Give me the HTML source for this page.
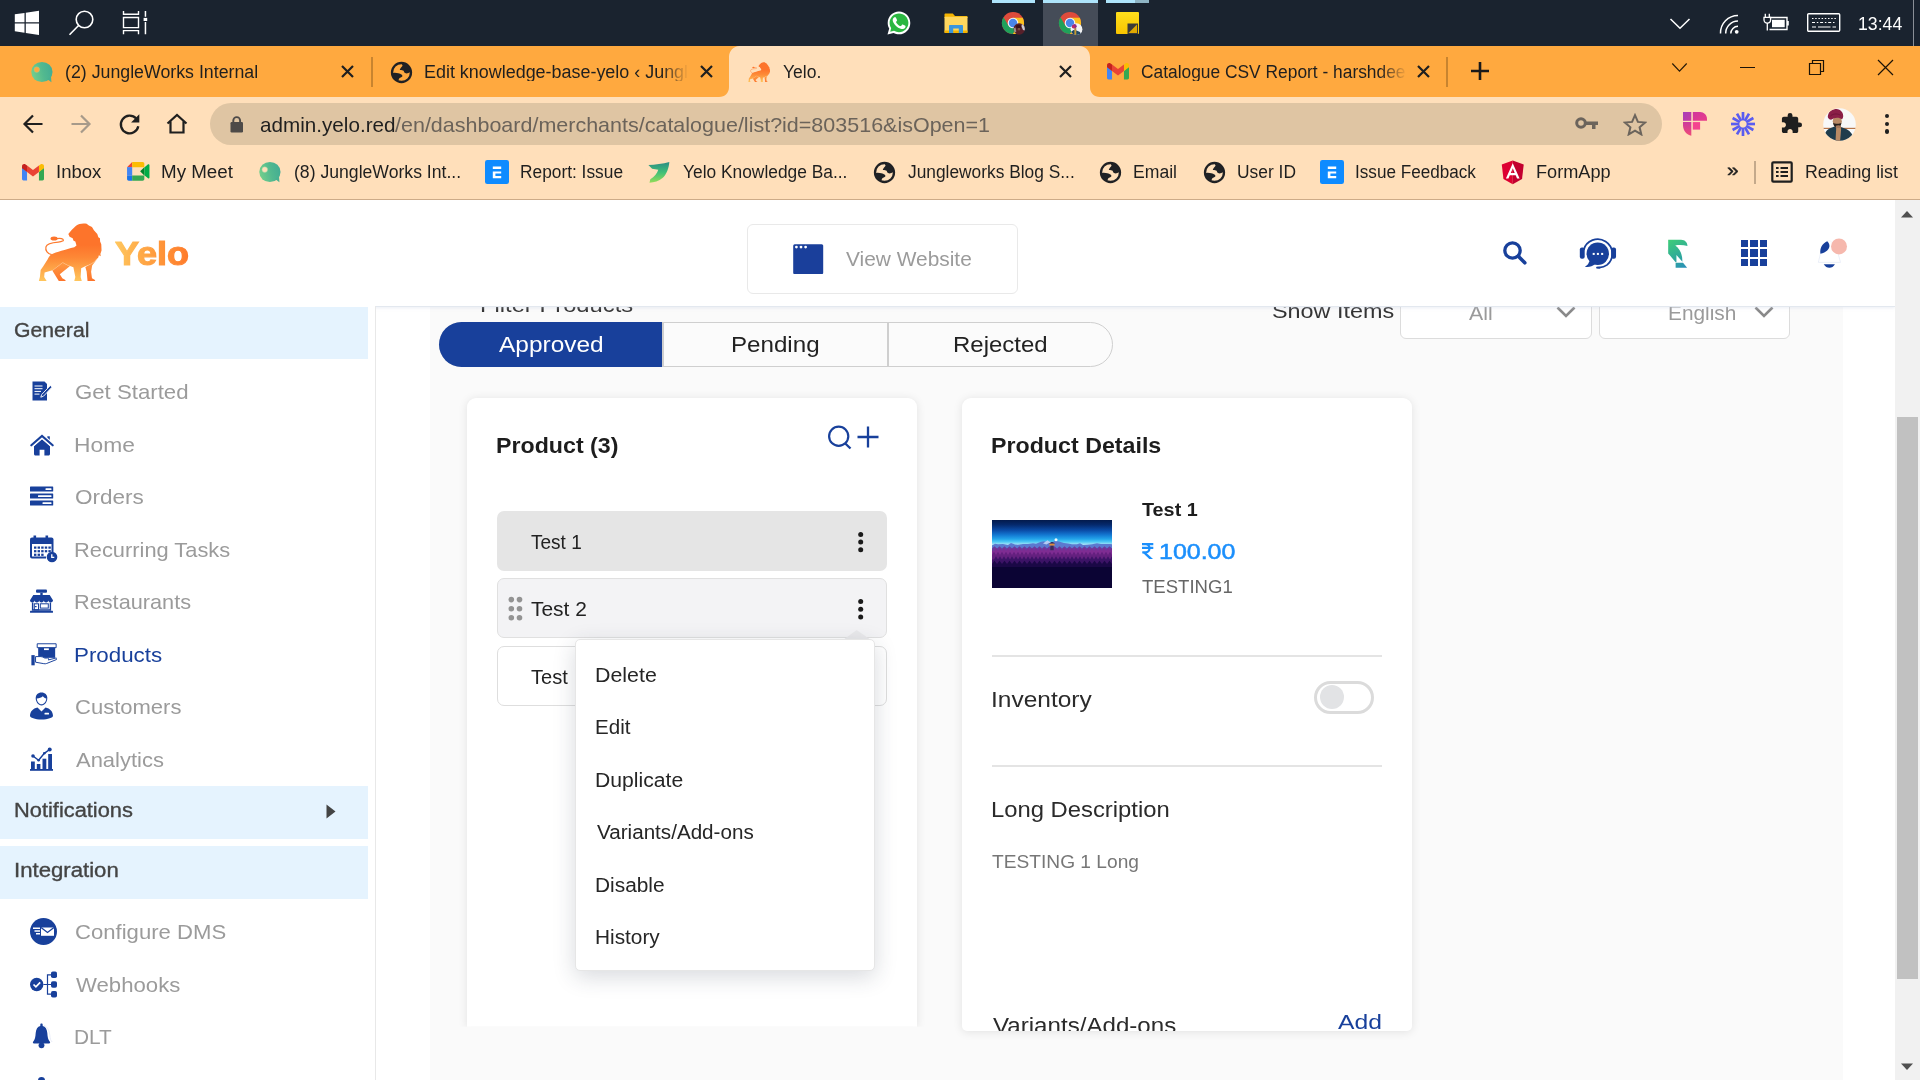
<!DOCTYPE html>
<html><head><meta charset="utf-8"><title>Yelo.</title>
<style>
html,body{margin:0;padding:0;}
body{width:1920px;height:1080px;overflow:hidden;position:relative;background:#fff;font-family:"Liberation Sans",sans-serif;}
.t{position:absolute;white-space:nowrap;font-family:"Liberation Sans",sans-serif;}
.r{position:absolute;box-sizing:border-box;}
</style></head><body>
<div class="r" style="left:0px;top:200px;width:1895px;height:880px;background:#fff;"></div>
<div class="r" style="left:429.5px;top:306px;width:1413.5px;height:774px;background:#fafafa;"></div>
<div class="t" style="left:480.10px;top:294.00px;font-size:21px;line-height:21px;color:#333;font-weight:400;transform:scaleX(1.1311);transform-origin:0 0;">Filter Products</div>
<div class="t" style="left:1271.56px;top:300.00px;font-size:21px;line-height:21px;color:#333;font-weight:400;transform:scaleX(1.1133);transform-origin:0 0;">Show Items</div>
<div class="r" style="left:1400px;top:280px;width:191.5px;height:58.5px;background:#fff;border:1px solid #dcdcdc;border-radius:6px;"></div>
<div class="r" style="left:1598.5px;top:280px;width:191.5px;height:58.5px;background:#fff;border:1px solid #dcdcdc;border-radius:6px;"></div>
<div class="t" style="left:1468.70px;top:303.00px;font-size:20.5px;line-height:20.5px;color:#9a9a9a;font-weight:400;transform:scaleX(1.0368);transform-origin:0 0;">All</div>
<div class="t" style="left:1668.33px;top:303.00px;font-size:20.5px;line-height:20.5px;color:#9a9a9a;font-weight:400;transform:scaleX(1.0164);transform-origin:0 0;">English</div>
<svg class="r" style="left:1555px;top:303px;" width="22" height="16" viewBox="0 0 22 16"><path d="M2.500 4.500L11 13l8.500-8.500" fill="none" stroke="#8a8a8a" stroke-width="2.600"/></svg>
<svg class="r" style="left:1753px;top:303px;" width="22" height="16" viewBox="0 0 22 16"><path d="M2.500 4.500L11 13l8.500-8.500" fill="none" stroke="#8a8a8a" stroke-width="2.600"/></svg>
<div class="r" style="left:438.5px;top:322px;width:674px;height:44.5px;background:#fbfbfb;border:1px solid #cfcfcf;border-radius:22.500px;"></div>
<div class="r" style="left:438.5px;top:322px;width:223.5px;height:44.5px;background:#18409b;border-radius:22.500px 0 0 22.500px;"></div>
<div class="r" style="left:662px;top:322px;width:1.5px;height:44.5px;background:#cfcfcf;"></div>
<div class="r" style="left:887.3px;top:322px;width:1.5px;height:44.5px;background:#cfcfcf;"></div>
<div class="t" style="left:499.00px;top:334.00px;font-size:22px;line-height:22px;color:#fff;font-weight:400;transform:scaleX(1.1115);transform-origin:0 0;">Approved</div>
<div class="t" style="left:731.07px;top:334.00px;font-size:22px;line-height:22px;color:#222;font-weight:400;transform:scaleX(1.0972);transform-origin:0 0;">Pending</div>
<div class="t" style="left:953.08px;top:334.00px;font-size:22px;line-height:22px;color:#222;font-weight:400;transform:scaleX(1.0891);transform-origin:0 0;">Rejected</div>
<div class="r" style="left:467px;top:398px;width:450px;height:628.7px;background:#fff;border-radius:9px 9px 0 0;box-shadow:0 1px 10px rgba(0,0,0,.10);clip-path:inset(-20px -20px 0 -20px);"></div>
<div class="t" style="left:496.31px;top:436.00px;font-size:21.5px;line-height:21.5px;color:#1d1d1d;font-weight:700;transform:scaleX(1.0786);transform-origin:0 0;">Product (3)</div>
<svg class="r" style="left:826px;top:424px;" width="28" height="28" viewBox="0 0 28 28"><circle cx="12.700" cy="12.300" r="9.600" fill="none" stroke="#18409b" stroke-width="2.200"/><path d="M19.300 19.500L24.500 24.500" stroke="#18409b" stroke-width="2.400"/></svg>
<svg class="r" style="left:856px;top:425px;" width="24" height="24" viewBox="0 0 24 24"><path d="M12 1.500v21M1.500 12h21" stroke="#18409b" stroke-width="2.300"/></svg>
<div class="r" style="left:497px;top:511px;width:390px;height:60px;background:#e5e5e5;border-radius:7px;"></div>
<div class="r" style="left:497px;top:578px;width:390px;height:60px;background:#f3f3f5;border:1px solid #e0e0e0;border-radius:7px;"></div>
<div class="r" style="left:497px;top:646px;width:390px;height:60px;background:#fff;border:1px solid #dedede;border-radius:7px;"></div>
<div class="t" style="left:531.12px;top:533.00px;font-size:19.5px;line-height:19.5px;color:#222;font-weight:400;transform:scaleX(0.9756);transform-origin:0 0;">Test 1</div>
<div class="t" style="left:531.08px;top:600.00px;font-size:19.5px;line-height:19.5px;color:#222;font-weight:400;transform:scaleX(1.0742);transform-origin:0 0;">Test 2</div>
<div class="t" style="left:531.10px;top:668.00px;font-size:19.5px;line-height:19.5px;color:#222;font-weight:400;transform:scaleX(1.0306);transform-origin:0 0;">Test</div>
<svg class="r" style="left:500px;top:520px;" width="380" height="110" viewBox="-350 0 380 110"><circle cx="10.7" cy="14.4" r="2.500" fill="#1a1a1a"/><circle cx="10.7" cy="22.1" r="2.500" fill="#1a1a1a"/><circle cx="10.7" cy="29.8" r="2.500" fill="#1a1a1a"/><circle cx="10.7" cy="81.6" r="2.500" fill="#1a1a1a"/><circle cx="10.7" cy="89.3" r="2.500" fill="#1a1a1a"/><circle cx="10.7" cy="97.0" r="2.500" fill="#1a1a1a"/><circle cx="-338.7" cy="79.6" r="2.800" fill="#939393"/><circle cx="-338.7" cy="88.7" r="2.800" fill="#939393"/><circle cx="-338.7" cy="97.7" r="2.800" fill="#939393"/><circle cx="-330.5" cy="79.6" r="2.800" fill="#939393"/><circle cx="-330.5" cy="88.7" r="2.800" fill="#939393"/><circle cx="-330.5" cy="97.7" r="2.800" fill="#939393"/></svg>
<svg class="r" style="left:843px;top:629.5px;" width="28" height="10" viewBox="0 0 28 10"><path d="M0 10L13.700 0 28 10z" fill="#e9e9eb"/></svg>
<div class="r" style="left:575px;top:638.5px;width:299.5px;height:332px;background:#fff;border-radius:5px;border:1px solid #e6e6e6;box-shadow:0 6px 22px rgba(40,50,70,.18);"></div>
<div class="t" style="left:594.99px;top:666.00px;font-size:19.5px;line-height:19.5px;color:#262626;font-weight:400;transform:scaleX(1.0961);transform-origin:0 0;">Delete</div>
<div class="t" style="left:595.06px;top:718.00px;font-size:19.5px;line-height:19.5px;color:#262626;font-weight:400;transform:scaleX(1.0535);transform-origin:0 0;">Edit</div>
<div class="t" style="left:595.01px;top:771.00px;font-size:19.5px;line-height:19.5px;color:#262626;font-weight:400;transform:scaleX(1.0844);transform-origin:0 0;">Duplicate</div>
<div class="t" style="left:596.70px;top:823.00px;font-size:19.5px;line-height:19.5px;color:#262626;font-weight:400;transform:scaleX(1.0579);transform-origin:0 0;">Variants/Add-ons</div>
<div class="t" style="left:595.03px;top:876.00px;font-size:19.5px;line-height:19.5px;color:#262626;font-weight:400;transform:scaleX(1.0706);transform-origin:0 0;">Disable</div>
<div class="t" style="left:595.03px;top:928.00px;font-size:19.5px;line-height:19.5px;color:#262626;font-weight:400;transform:scaleX(1.0675);transform-origin:0 0;">History</div>
<div class="r" style="left:962px;top:398px;width:450px;height:633px;background:#fff;border-radius:9px 9px 5px 5px;box-shadow:0 1px 10px rgba(0,0,0,.10);overflow:hidden;"></div>
<div class="t" style="left:990.81px;top:436.00px;font-size:21.5px;line-height:21.5px;color:#1d1d1d;font-weight:700;transform:scaleX(1.0795);transform-origin:0 0;">Product Details</div>
<div class="r" style="left:992px;top:520px;width:120px;height:68px;overflow:hidden;background:linear-gradient(180deg,#031a4c 0%,#05296c 7%,#0a4ba6 15%,#1378d2 22%,#23a4ea 28%,#4cc8f4 32%,#a5e2f8 36%,#6a86d4 39%,#0b0434 60%,#0a0330 100%);"><svg class="r" style="left:0;top:0" width="120" height="68" viewBox="0 0 120 68"><path d="M0.0 25.5L3.0 23.8L6.0 24.3L11.0 24.1L16.0 25.0L19.0 23.1L23.0 24.6L26.0 24.8L31.0 24.1L36.0 24.1L41.0 23.2L44.0 23.7L49.0 21.8L52.0 21.2L55.0 22.3L60.0 22.6L63.0 20.8L67.0 21.6L72.0 23.1L76.0 23.6L80.0 24.3L85.0 24.2L88.0 23.2L91.0 25.1L95.0 24.7L100.0 24.2L105.0 23.2L109.0 24.0L113.0 23.9L118.0 23.9L123.0 24.7V34H0z" fill="#5b79cf"/><path d="M51 23.500l4.500-3.200 4 2.700-3 .3-2 1.200z" fill="#b4ccf4"/><path d="M0 28.5L2.5 26.3L5.0 28.5L7.5 26.3L10.0 28.5L12.5 26.3L15.0 28.5L17.5 26.3L20.0 28.5L22.5 26.3L25.0 28.5L27.5 26.3L30.0 28.5L32.5 26.3L35.0 28.5L37.5 26.3L40.0 28.5L42.5 26.3L45.0 28.5L47.5 26.3L50.0 28.5L52.5 26.3L55.0 28.5L57.5 26.3L60.0 28.5L62.5 26.3L65.0 28.5L67.5 26.3L70.0 28.5L72.5 26.3L75.0 28.5L77.5 26.3L80.0 28.5L82.5 26.3L85.0 28.5L87.5 26.3L90.0 28.5L92.5 26.3L95.0 28.5L97.5 26.3L100.0 28.5L102.5 26.3L105.0 28.5L107.5 26.3L110.0 28.5L112.5 26.3L115.0 28.5L117.5 26.3L120.0 28.5L122.5 26.3V40 H0z" fill="#6b3a9c"/><path d="M0 31.0L2.0 31.0L4.0 28.0L6.0 31.0L8.0 28.0L10.0 31.0L12.0 28.0L14.0 31.0L16.0 28.0L18.0 31.0L20.0 28.0L22.0 31.0L24.0 28.0L26.0 31.0L28.0 28.0L30.0 31.0L32.0 28.0L34.0 31.0L36.0 28.0L38.0 31.0L40.0 28.0L42.0 31.0L44.0 28.0L46.0 31.0L48.0 28.0L50.0 31.0L52.0 28.0L54.0 31.0L56.0 28.0L58.0 31.0L60.0 28.0L62.0 31.0L64.0 28.0L66.0 31.0L68.0 28.0L70.0 31.0L72.0 28.0L74.0 31.0L76.0 28.0L78.0 31.0L80.0 28.0L82.0 31.0L84.0 28.0L86.0 31.0L88.0 28.0L90.0 31.0L92.0 28.0L94.0 31.0L96.0 28.0L98.0 31.0L100.0 28.0L102.0 31.0L104.0 28.0L106.0 31.0L108.0 28.0L110.0 31.0L112.0 28.0L114.0 31.0L116.0 28.0L118.0 31.0L120.0 28.0L122.0 31.0V44 H0z" fill="#7f2c92"/><path d="M0 35.0L2.0 31.7L4.0 35.0L6.0 31.7L8.0 35.0L10.0 31.7L12.0 35.0L14.0 31.7L16.0 35.0L18.0 31.7L20.0 35.0L22.0 31.7L24.0 35.0L26.0 31.7L28.0 35.0L30.0 31.7L32.0 35.0L34.0 31.7L36.0 35.0L38.0 31.7L40.0 35.0L42.0 31.7L44.0 35.0L46.0 31.7L48.0 35.0L50.0 31.7L52.0 35.0L54.0 31.7L56.0 35.0L58.0 31.7L60.0 35.0L62.0 31.7L64.0 35.0L66.0 31.7L68.0 35.0L70.0 31.7L72.0 35.0L74.0 31.7L76.0 35.0L78.0 31.7L80.0 35.0L82.0 31.7L84.0 35.0L86.0 31.7L88.0 35.0L90.0 31.7L92.0 35.0L94.0 31.7L96.0 35.0L98.0 31.7L100.0 35.0L102.0 31.7L104.0 35.0L106.0 31.7L108.0 35.0L110.0 31.7L112.0 35.0L114.0 31.7L116.0 35.0L118.0 31.7L120.0 35.0L122.0 31.7V50 H0z" fill="#64207f"/><path d="M0 39.5L2.0 39.5L4.0 36.2L6.0 39.5L8.0 36.2L10.0 39.5L12.0 36.2L14.0 39.5L16.0 36.2L18.0 39.5L20.0 36.2L22.0 39.5L24.0 36.2L26.0 39.5L28.0 36.2L30.0 39.5L32.0 36.2L34.0 39.5L36.0 36.2L38.0 39.5L40.0 36.2L42.0 39.5L44.0 36.2L46.0 39.5L48.0 36.2L50.0 39.5L52.0 36.2L54.0 39.5L56.0 36.2L58.0 39.5L60.0 36.2L62.0 39.5L64.0 36.2L66.0 39.5L68.0 36.2L70.0 39.5L72.0 36.2L74.0 39.5L76.0 36.2L78.0 39.5L80.0 36.2L82.0 39.5L84.0 36.2L86.0 39.5L88.0 36.2L90.0 39.5L92.0 36.2L94.0 39.5L96.0 36.2L98.0 39.5L100.0 36.2L102.0 39.5L104.0 36.2L106.0 39.5L108.0 36.2L110.0 39.5L112.0 36.2L114.0 39.5L116.0 36.2L118.0 39.5L120.0 36.2L122.0 39.5V56 H0z" fill="#3c1366"/><path d="M0 44.0L2.5 40.7L5.0 44.0L7.5 40.7L10.0 44.0L12.5 40.7L15.0 44.0L17.5 40.7L20.0 44.0L22.5 40.7L25.0 44.0L27.5 40.7L30.0 44.0L32.5 40.7L35.0 44.0L37.5 40.7L40.0 44.0L42.5 40.7L45.0 44.0L47.5 40.7L50.0 44.0L52.5 40.7L55.0 44.0L57.5 40.7L60.0 44.0L62.5 40.7L65.0 44.0L67.5 40.7L70.0 44.0L72.5 40.7L75.0 44.0L77.5 40.7L80.0 44.0L82.5 40.7L85.0 44.0L87.5 40.7L90.0 44.0L92.5 40.7L95.0 44.0L97.5 40.7L100.0 44.0L102.5 40.7L105.0 44.0L107.5 40.7L110.0 44.0L112.5 40.7L115.0 44.0L117.5 40.7L120.0 44.0L122.5 40.7V68 H0z" fill="#1a0846"/><rect x="0" y="47" width="120" height="21" fill="#0b0434"/><circle cx="64" cy="19.800" r="1.500" fill="#f2fdff"/><rect x="57.500" y="23.300" width="5" height="2.400" fill="#e08a3c"/><rect x="58.300" y="25.700" width="3.400" height="4.500" fill="#3a2a5a"/><path d="M56.800 23.500l3.200-1.800 3.200 1.800z" fill="#2a2a5a"/></svg></div>
<div class="t" style="left:1141.80px;top:500.00px;font-size:19px;line-height:19px;color:#1d1d1d;font-weight:700;transform:scaleX(1.0414);transform-origin:0 0;">Test 1</div>
<svg class="r" style="left:1142px;top:543px;" width="12" height="16.5" viewBox="0 0 12 16.5"><path d="M0 1.100H11.300M0 4.800H11.300M1 1.100H3.700C8.700 1.100 8.700 9.300 3.700 9.300H.3" fill="none" stroke="#1b8ffc" stroke-width="2.200"/><path d="M.3 9.300H3.600L11 16H7.300z" fill="#1b8ffc"/></svg>
<div class="t" style="left:1159.25px;top:542.00px;font-size:21.5px;line-height:21.5px;color:#1b8ffc;font-weight:400;transform:scaleX(1.1610);transform-origin:0 0;-webkit-text-stroke:.5px #1b8ffc;">100.00</div>
<div class="t" style="left:1141.63px;top:577.00px;font-size:19px;line-height:19px;color:#666;font-weight:400;transform:scaleX(0.9766);transform-origin:0 0;">TESTING1</div>
<div class="r" style="left:992px;top:654.9px;width:390px;height:1.8px;background:#e4e4e4;"></div>
<div class="t" style="left:990.50px;top:690.00px;font-size:21.5px;line-height:21.5px;color:#2b2b2b;font-weight:400;transform:scaleX(1.1387);transform-origin:0 0;">Inventory</div>
<div class="r" style="left:1314px;top:681px;width:60px;height:33px;background:#fff;border:3px solid #dbdbdb;border-radius:17px;"></div>
<div class="r" style="left:1319.9px;top:685px;width:24.4px;height:24.4px;background:#e2e3e5;border-radius:50%;"></div>
<div class="r" style="left:992px;top:764.8px;width:390px;height:1.8px;background:#e4e4e4;"></div>
<div class="t" style="left:990.79px;top:799.00px;font-size:22px;line-height:22px;color:#2b2b2b;font-weight:400;transform:scaleX(1.0827);transform-origin:0 0;">Long Description</div>
<div class="t" style="left:991.62px;top:852.00px;font-size:19px;line-height:19px;color:#777;font-weight:400;transform:scaleX(1.0084);transform-origin:0 0;">TESTING 1 Long</div>
<div class="r" style="left:962px;top:1000px;width:450px;height:31px;overflow:hidden;">
<div class="t" style="left:30.70px;top:15.00px;font-size:22px;line-height:22px;color:#2b2b2b;font-weight:400;transform:scaleX(1.0963);transform-origin:0 0;">Variants/Add-ons</div>
<div class="t" style="left:375.50px;top:11.00px;font-size:21px;line-height:21px;color:#18409b;font-weight:400;transform:scaleX(1.1745);transform-origin:0 0;">Add</div>
</div>
<div class="r" style="left:0px;top:200px;width:1895px;height:106px;background:#fff;box-shadow:0 1px 0 #e3e8ef,0 2px 3px rgba(200,210,225,.35);"></div>
<svg class="r" style="left:30px;top:215px;" width="170" height="75" viewBox="0 0 1920 847"><defs><linearGradient id="lbA" x1="0" y1="340" x2="0" y2="745" gradientUnits="userSpaceOnUse"><stop offset="0" stop-color="#fd742b"/><stop offset=".35" stop-color="#fd8836"/><stop offset="1" stop-color="#ffc65c"/></linearGradient><linearGradient id="lbB" x1="0" y1="540" x2="0" y2="745" gradientUnits="userSpaceOnUse"><stop offset="0" stop-color="#fe9a44"/><stop offset="1" stop-color="#fd742b"/></linearGradient></defs><path fill="url(#lbB)" d="M250 625L325 745H405L395 730 365 715 337 670 452 575 370 528z"/><path fill="url(#lbB)" d="M625 588L640 640 650 745H738L730 730 700 715 690 640 702 570 765 488 700 540z"/><path fill="url(#lbA)" stroke="#fff" stroke-width="5" paint-order="stroke" d="M520 120C550 100 600 88 640 100L665 118 700 135 722 172 760 215 772 250 790 262 792 300 805 330 808 400 795 440 800 465 778 455 770 482 752 498C720 540 670 565 625 580L578 600 572 700 585 745H500L512 700 500 640 490 590C450 580 410 560 370 535L255 625 165 650 160 700 188 745H100L112 700 120 620 150 580 200 500C215 470 225 455 240 445C300 420 400 390 500 365L525 345 512 300 492 292 482 262 447 246 433 215 470 170z"/><path fill="none" stroke="#fd7a2e" stroke-width="14" d="M245 448C200 440 170 400 180 360C190 318 250 310 320 305C362 302 388 290 372 275C356 262 320 265 300 268"/><ellipse cx="272" cy="265" rx="40" ry="23" fill="#fd742b"/></svg>
<div class="t" style="left:114.5px;top:237.27px;font-size:33px;line-height:33px;font-weight:700;letter-spacing:0px;transform:scaleX(1.09);transform-origin:0 0;background:linear-gradient(90deg,#ffc75e 0%,#ff9a3c 55%,#ff7a2a 100%);-webkit-background-clip:text;background-clip:text;color:transparent;-webkit-text-stroke:1.200px transparent;">Yelo</div>
<div class="r" style="left:747px;top:224px;width:270.5px;height:70px;background:#fff;border:1px solid #e9e9e9;border-radius:6px;"></div>
<svg class="r" style="left:793px;top:243.7px;" width="30.5" height="30.5" viewBox="0 0 30.5 30.5"><rect x=".2" y=".2" width="30" height="30" rx="1.500" fill="#1a3f9b"/><circle cx="3.400" cy="3.100" r="1.400" fill="#fff"/><circle cx="8" cy="3.100" r="1.400" fill="#fff"/><circle cx="12.600" cy="3.100" r="1.400" fill="#fff"/></svg>
<div class="t" style="left:845.50px;top:248.00px;font-size:21px;line-height:21px;color:#9b9b9b;font-weight:400;transform:scaleX(0.9945);transform-origin:0 0;">View Website</div>
<svg class="r" style="left:1502px;top:240px;" width="26" height="26" viewBox="0 0 26 26"><circle cx="10.500" cy="10.500" r="7.700" fill="none" stroke="#18409b" stroke-width="3.300"/><path d="M16.300 16.300L22.800 22.800" stroke="#18409b" stroke-width="3.600" stroke-linecap="round"/></svg>
<svg class="r" style="left:1570px;top:230px;" width="130" height="50" viewBox="0 0 1920 738"><defs><linearGradient id="ga" x1="1450" y1="145" x2="1700" y2="560" gradientUnits="userSpaceOnUse"><stop offset="0" stop-color="#3fce78"/><stop offset=".6" stop-color="#2fa99a"/><stop offset="1" stop-color="#2a8fb8"/></linearGradient></defs><circle cx="410" cy="350" r="166" fill="#18409b"/><path d="M285 462C272 505 250 528 220 542C272 552 332 538 372 502z" fill="#18409b"/><path d="M202 294A215 215 0 1 1 548 515Q500 550 430 556" fill="none" stroke="#18409b" stroke-width="27"/><rect x="145" y="258" width="72" height="166" rx="30" fill="#18409b"/><rect x="608" y="258" width="72" height="166" rx="30" fill="#18409b"/><ellipse cx="418" cy="556" rx="34" ry="17" fill="#18409b"/><rect x="335" y="338" width="30" height="30" fill="#fff"/><rect x="397" y="338" width="30" height="30" fill="#fff"/><rect x="460" y="338" width="30" height="30" fill="#fff"/><path d="M1450 145H1640C1700 145 1735 190 1735 235C1680 222 1610 218 1555 228C1625 280 1662 360 1660 470L1572 368V475H1560L1450 345z" fill="url(#ga)"/><path d="M1560 485H1670L1730 556H1560z" fill="url(#ga)"/></svg>
<div class="r" style="left:1740.7px;top:239.8px;width:7.25px;height:7.25px;background:#18409b;"></div>
<div class="r" style="left:1750.3500000000001px;top:239.8px;width:7.25px;height:7.25px;background:#18409b;"></div>
<div class="r" style="left:1760.0px;top:239.8px;width:7.25px;height:7.25px;background:#18409b;"></div>
<div class="r" style="left:1740.7px;top:249.45000000000002px;width:7.25px;height:7.25px;background:#18409b;"></div>
<div class="r" style="left:1750.3500000000001px;top:249.45000000000002px;width:7.25px;height:7.25px;background:#18409b;"></div>
<div class="r" style="left:1760.0px;top:249.45000000000002px;width:7.25px;height:7.25px;background:#18409b;"></div>
<div class="r" style="left:1740.7px;top:259.1px;width:7.25px;height:7.25px;background:#18409b;"></div>
<div class="r" style="left:1750.3500000000001px;top:259.1px;width:7.25px;height:7.25px;background:#18409b;"></div>
<div class="r" style="left:1760.0px;top:259.1px;width:7.25px;height:7.25px;background:#18409b;"></div>
<svg class="r" style="left:1730px;top:230px;" width="130" height="50" viewBox="0 0 1920 738"><path d="M1335 350L1305 478H1632L1600 360" fill="none" stroke="#dfe6f5" stroke-width="9"/><path d="M1435 160C1480 150 1510 175 1520 210" fill="none" stroke="#e6ecf8" stroke-width="7"/><path d="M1435 165C1360 200 1325 270 1335 350C1420 335 1475 280 1468 225C1465 200 1452 180 1435 165z" fill="#18409b"/><path d="M1385 505H1550C1530 540 1500 557 1468 557C1436 557 1405 540 1385 505z" fill="#18409b"/><circle cx="1610" cy="243" r="118" fill="#f6b8ad"/></svg>
<div class="r" style="left:0px;top:306px;width:375px;height:774px;background:#fff;"></div>
<div class="r" style="left:375px;top:306px;width:1px;height:774px;background:#e8e8e8;"></div>
<div class="r" style="left:0px;top:307.2px;width:368px;height:51.4px;background:#e5f3fe;"></div>
<div class="r" style="left:0px;top:786px;width:368px;height:52.7px;background:#e5f3fe;"></div>
<div class="r" style="left:0px;top:845.8px;width:368px;height:52.9px;background:#e5f3fe;"></div>
<div class="t" style="left:14.44px;top:320.00px;font-size:20px;line-height:20px;color:#444;font-weight:400;transform:scaleX(1.0594);transform-origin:0 0;-webkit-text-stroke:.35px #444;">General</div>
<div class="t" style="left:13.75px;top:800.00px;font-size:20px;line-height:20px;color:#444;font-weight:400;transform:scaleX(1.0915);transform-origin:0 0;-webkit-text-stroke:.35px #444;">Notifications</div>
<div class="t" style="left:13.51px;top:860.00px;font-size:20px;line-height:20px;color:#444;font-weight:400;transform:scaleX(1.1082);transform-origin:0 0;-webkit-text-stroke:.35px #444;">Integration</div>
<svg class="r" style="left:326px;top:803.5px;" width="10" height="15" viewBox="0 0 10 15"><path d="M.5 .5L9.500 7.500 .5 14.500z" fill="#444"/></svg>
<div class="t" style="left:74.69px;top:381.00px;font-size:21px;line-height:21px;color:#9b9b9b;font-weight:400;transform:scaleX(1.0574);transform-origin:0 0;">Get Started</div>
<div class="t" style="left:73.98px;top:434.00px;font-size:21px;line-height:21px;color:#9b9b9b;font-weight:400;transform:scaleX(1.0863);transform-origin:0 0;">Home</div>
<div class="t" style="left:74.90px;top:486.00px;font-size:21px;line-height:21px;color:#9b9b9b;font-weight:400;transform:scaleX(1.0716);transform-origin:0 0;">Orders</div>
<div class="t" style="left:74.05px;top:539.00px;font-size:21px;line-height:21px;color:#9b9b9b;font-weight:400;transform:scaleX(1.0402);transform-origin:0 0;">Recurring Tasks</div>
<div class="t" style="left:74.06px;top:591.00px;font-size:21px;line-height:21px;color:#9b9b9b;font-weight:400;transform:scaleX(1.0341);transform-origin:0 0;">Restaurants</div>
<div class="t" style="left:74.01px;top:644.00px;font-size:21px;line-height:21px;color:#18409b;font-weight:400;transform:scaleX(1.0638);transform-origin:0 0;">Products</div>
<div class="t" style="left:74.70px;top:696.00px;font-size:21px;line-height:21px;color:#9b9b9b;font-weight:400;transform:scaleX(1.0486);transform-origin:0 0;">Customers</div>
<div class="t" style="left:75.80px;top:749.00px;font-size:21px;line-height:21px;color:#9b9b9b;font-weight:400;transform:scaleX(1.0456);transform-origin:0 0;">Analytics</div>
<div class="t" style="left:74.69px;top:921.00px;font-size:21px;line-height:21px;color:#9b9b9b;font-weight:400;transform:scaleX(1.0527);transform-origin:0 0;">Configure DMS</div>
<div class="t" style="left:75.80px;top:974.00px;font-size:21px;line-height:21px;color:#9b9b9b;font-weight:400;transform:scaleX(1.0559);transform-origin:0 0;">Webhooks</div>
<div class="t" style="left:74.13px;top:1026.00px;font-size:21px;line-height:21px;color:#9b9b9b;font-weight:400;transform:scaleX(0.9918);transform-origin:0 0;">DLT</div>
<svg class="r" style="left:31px;top:380px;" width="22" height="22" viewBox="0 0 22 22"><path d="M1.500 1.500h12l2.500 2.500V20.500H1.500z" fill="#18409b"/><path d="M3.500 6h8M3.500 8.700h8M3.500 11.400h6.500M3.500 14.100h5" stroke="#fff" stroke-width="1"/><path d="M19.300 5.500l1.700 1.700-8.500 9-2.700 1 .9-2.700z" fill="#18409b" stroke="#fff" stroke-width=".9"/></svg>
<svg class="r" style="left:29.5px;top:434px;" width="24" height="23" viewBox="0 0 24 23"><rect x="17.300" y="2.300" width="2.500" height="5.500" fill="#18409b"/><path d="M12 5.300L4 12.300V20c0 .8.700 1.500 1.500 1.500H9.600V15.800h4.800v5.700h4.100c.8 0 1.500-.7 1.500-1.500V12.300z" fill="#18409b"/><path d="M1.300 11.300L12 2l10.700 9.300" fill="none" stroke="#fff" stroke-width="4.600"/><path d="M1.300 11.300L12 2l10.700 9.300" fill="none" stroke="#18409b" stroke-width="2.100" stroke-linecap="round"/></svg>
<svg class="r" style="left:30px;top:486px;" width="23.5" height="20" viewBox="0 0 23.500 20"><rect x="0" y=".5" width="23.200" height="5" rx=".6" fill="#18409b"/><rect x="0" y="7.500" width="23.200" height="5" rx=".6" fill="#18409b"/><rect x="0" y="14.500" width="23.200" height="5" rx=".6" fill="#18409b"/><rect x="15.500" y="2.200" width="6" height="1.700" rx=".5" fill="#fff"/><rect x="8" y="9.200" width="13.500" height="1.700" rx=".5" fill="#fff"/><rect x="12.500" y="16.200" width="9" height="1.700" rx=".5" fill="#fff"/></svg>
<svg class="r" style="left:30px;top:535px;" width="28" height="28" viewBox="0 0 28 28"><rect x="3.500" y=".5" width="2.600" height="4" fill="#18409b"/><rect x="15.500" y=".5" width="2.600" height="4" fill="#18409b"/><path d="M0 4.500c0-1.100.9-2 2-2h19.500c1.100 0 2 .9 2 2V9H0z" fill="#18409b"/><path d="M1 9v12.500c0 .6.400 1 1 1h14" fill="none" stroke="#18409b" stroke-width="2"/><path d="M22.500 9v8" stroke="#18409b" stroke-width="2"/><g fill="#18409b"><rect x="4.0" y="11.5" width="2.400" height="2.200"/><rect x="7.6" y="11.5" width="2.400" height="2.200"/><rect x="11.2" y="11.5" width="2.400" height="2.200"/><rect x="14.8" y="11.5" width="2.400" height="2.200"/><rect x="18.4" y="11.5" width="2.400" height="2.200"/><rect x="4.0" y="15.1" width="2.400" height="2.200"/><rect x="7.6" y="15.1" width="2.400" height="2.200"/><rect x="11.2" y="15.1" width="2.400" height="2.200"/><rect x="14.8" y="15.1" width="2.400" height="2.200"/><rect x="18.4" y="15.1" width="2.400" height="2.200"/><rect x="4.0" y="18.7" width="2.400" height="2.200"/><rect x="7.6" y="18.7" width="2.400" height="2.200"/><rect x="11.2" y="18.7" width="2.400" height="2.200"/></g><circle cx="22" cy="22" r="5.300" fill="#18409b"/><path d="M21.800 19.300v3h2.500" fill="none" stroke="#fff" stroke-width="1.300"/></svg>
<svg class="r" style="left:30px;top:589px;" width="23" height="24" viewBox="0 0 23 24"><rect x="6" y=".5" width="11" height="3.300" rx="1" fill="#18409b"/><rect x="10.300" y="3.800" width="2.400" height="2.200" fill="#18409b"/><path d="M3.300 6h16.400l3.300 5.300c0 1.300-1 2.100-2.300 2.100s-2.300-.8-2.300-2.100c0 1.300-1 2.100-2.300 2.100s-2.300-.8-2.300-2.100c0 1.300-1 2.100-2.300 2.100s-2.300-.8-2.300-2.100c0 1.300-1 2.100-2.300 2.100s-2.300-.8-2.300-2.100c0 1.300-1 2.100-2.300 2.100S0 12.600 0 11.300z" fill="#18409b"/><path d="M2.600 13.500V21h17.800v-7.500" fill="none" stroke="#18409b" stroke-width="1.400"/><rect x="4.300" y="14.800" width="4.200" height="6" fill="none" stroke="#18409b" stroke-width="1"/><rect x="5" y="17" width="1.600" height="1.200" fill="#18409b"/><rect x="10.300" y="14.800" width="8" height="4.300" fill="none" stroke="#18409b" stroke-width="1"/><rect x="0" y="21.700" width="23" height="2" rx=".5" fill="#18409b"/></svg>
<svg class="r" style="left:30.5px;top:642.8px;" width="26" height="22.8" viewBox="0 0 26 23.500"><path d="M6 .8h19.500v4H6z" fill="none" stroke="#18409b" stroke-width="1"/><rect x="7" y="4.800" width="17.500" height="10.500" fill="#18409b"/><rect x="13" y="5.500" width="5" height="1.800" fill="#fff"/><rect x="0" y="12.500" width="3.400" height="10.500" fill="#18409b"/><path d="M4.300 14h5.500c1.500 0 2.800.7 4 1.500h3c1 0 1.500 1.500.5 2l8-2c1-.2 1.500 1 .5 1.600l-10 4c-1 .4-2 .4-3 .2l-8.500-1.500z" fill="#fff" stroke="#18409b" stroke-width="1"/></svg>
<svg class="r" style="left:30px;top:692px;" width="23" height="28" viewBox="0 0 23 28"><path d="M11.500 .5c3.600 0 5.800 2.300 5.800 5.600 0 4-2.500 7.400-5.800 7.400S5.700 10.100 5.700 6.100C5.700 2.800 7.900.5 11.500.5z" fill="#18409b"/><path d="M6.800 6.500c2.500-.2 4.500-1 6-2.300 1 1.200 2.200 2 3.500 2.300-.2 3.200-2.200 5.800-4.800 5.800s-4.500-2.600-4.700-5.800z" fill="#fff"/><path d="M0 24c0-4.500 3-7.500 7.500-8.500l4 4 4-4c4.500 1 7.500 4 7.500 8.500 0 1.500-5 3.500-11.500 3.500S0 25.500 0 24z" fill="#18409b"/><path d="M8.500 14.500l3 3.200 3-3.200" fill="none" stroke="#fff" stroke-width="1"/><rect x="14.500" y="20.800" width="4.500" height="1.600" rx=".5" fill="#fff"/></svg>
<svg class="r" style="left:30px;top:747px;" width="23" height="24" viewBox="0 0 23 24"><rect x="1" y="14.500" width="3.800" height="8" fill="#18409b"/><rect x="6.800" y="17" width="3.600" height="5.500" fill="#18409b"/><rect x="12.500" y="11.700" width="3.800" height="11" fill="#18409b"/><rect x="18.200" y="7" width="3.800" height="15.500" fill="#18409b"/><rect x="0" y="22" width="23" height="1.800" fill="#18409b"/><path d="M3 9L8.600 13.300 14.300 6.300 19.600 2.500" fill="none" stroke="#18409b" stroke-width="1.500"/><circle cx="3" cy="9" r="1.800" fill="#18409b"/><circle cx="8.600" cy="13.300" r="1.300" fill="#18409b"/><circle cx="14.300" cy="6.300" r="1.300" fill="#18409b"/><circle cx="19.700" cy="2.400" r="2" fill="#18409b"/></svg>
<svg class="r" style="left:30px;top:917.5px;" width="27" height="27" viewBox="0 0 27 27"><circle cx="13.500" cy="13.500" r="13.500" fill="#18409b"/><path d="M11 9.500h13v8.300H11z" fill="#fff"/><path d="M11 9.500l6.500 5 6.500-5" fill="none" stroke="#18409b" stroke-width="1.300"/><path d="M3 10.300h7M4.500 13h5.500M6 15.700h4" stroke="#fff" stroke-width="1.500"/></svg>
<svg class="r" style="left:30px;top:970.5px;" width="27" height="27" viewBox="0 0 27 27"><circle cx="6.700" cy="13.500" r="6.700" fill="#18409b"/><path d="M3.500 13.500l2.400 2.400 4.300-4.600" fill="none" stroke="#fff" stroke-width="1.700"/><path d="M13.400 13.500h4.500M17.500 3.800h5M17.500 23.200h5M17.500 3.300v20.400M17.500 13.500h5" fill="none" stroke="#18409b" stroke-width="1.200"/><rect x="21" y=".5" width="6" height="6.500" rx="1.800" fill="#18409b"/><rect x="21" y="10.200" width="6" height="6.500" rx="1.800" fill="#18409b"/><rect x="21" y="20" width="6" height="6.500" rx="1.800" fill="#18409b"/></svg>
<svg class="r" style="left:32px;top:1023.2px;" width="22" height="26" viewBox="0 0 22 26"><path d="M9.500 .6c.8 0 1.200.5 1.200 1.300V3c2.800.7 4.300 3.200 4.600 7 .3 4 .6 6.300 2.600 8.800.5.700.2 1.700-.8 1.700H1.900c-1 0-1.300-1-.8-1.700C3.100 16.300 3.400 14 3.700 10 4 6.200 5.500 3.700 8.300 3V1.900c0-.8.400-1.300 1.200-1.300z" fill="#18409b"/><circle cx="9.500" cy="22.300" r="2.900" fill="#18409b"/><path d="M12 2.500c4 1.500 5.500 6 5.800 10 .2 3 1 5 2.300 6.500" fill="none" stroke="#dfe5f3" stroke-width=".7"/></svg>
<div class="r" style="left:38px;top:1077px;width:7px;height:6px;background:#18409b;border-radius:3.500px 3.500px 0 0;"></div>
<div class="r" style="left:1895px;top:200px;width:25px;height:880px;background:#f1f1f1;"></div>
<div class="r" style="left:1897px;top:417px;width:21px;height:562px;background:#c1c1c1;"></div>
<svg class="r" style="left:1900px;top:209px;" width="14" height="10" viewBox="0 0 14 10"><path d="M1 8.500L7 2l6 6.500z" fill="#505050"/></svg>
<svg class="r" style="left:1900px;top:1062px;" width="14" height="10" viewBox="0 0 14 10"><path d="M1 1.500L7 8l6-6.500z" fill="#505050"/></svg>
<div class="r" style="left:0px;top:0px;width:1920px;height:46px;background:#1a232f;"></div>
<svg class="r" style="left:14px;top:10px;" width="26" height="26" viewBox="0 0 26 26"><path d="M.8 4.300L10.500 2.900V12.200H.8zM11.800 2.700L25 .8V12.200H11.800zM.8 13.500H10.500V22.700L.8 21.300zM11.800 13.500H25V25L11.800 23z" fill="#fff"/></svg>
<svg class="r" style="left:66px;top:8px;" width="32" height="30" viewBox="0 0 32 30"><circle cx="18.500" cy="11.500" r="8.300" fill="none" stroke="#fff" stroke-width="1.600"/><path d="M12.600 17.500L3.500 26.700" stroke="#fff" stroke-width="1.600"/></svg>
<svg class="r" style="left:120px;top:9px;" width="30" height="28" viewBox="0 0 30 28"><path d="M3.500 1.900V5.200H18.500V1.900M3.500 8.500H18.500V18.600H3.500zM3.500 25.300V21.600H18.500V25.300" fill="none" stroke="#fff" stroke-width="1.400"/><path d="M25.450 1.900V7.800M25.450 12.900V25.300" stroke="#fff" stroke-width="1.500"/><rect x="23.600" y="8.900" width="3.600" height="3.100" fill="#fff"/></svg>
<div class="r" style="left:992px;top:0px;width:43px;height:3px;background:#aee4fb;"></div>
<div class="r" style="left:1043px;top:0px;width:55px;height:46px;background:#454c58;"></div>
<div class="r" style="left:1043px;top:0px;width:55px;height:3px;background:#aee4fb;"></div>
<div class="r" style="left:1106px;top:0px;width:43px;height:3px;background:#aee4fb;"></div>
<div class="r" style="left:1135px;top:0px;width:14px;height:3px;background:#8fb4c4;"></div>
<svg class="r" style="left:887px;top:11px;" width="24" height="24" viewBox="0 0 24 24"><path d="M12 .6C5.700 .6 .7 5.700 .7 11.900c0 2 .5 4 1.500 5.700L.5 23.500l6-1.600c1.700.9 3.600 1.400 5.500 1.400 6.200 0 11.300-5.100 11.300-11.400C23.300 5.700 18.200.6 12 .6z" fill="#fff"/><path d="M12 2.500c-5.200 0-9.400 4.200-9.400 9.400 0 1.900.6 3.700 1.600 5.200l-1 3.700 3.800-1c1.500.9 3.200 1.400 5 1.400 5.200 0 9.400-4.200 9.400-9.400S17.200 2.500 12 2.500z" fill="#2bb741"/><path d="M9 6.800c-.2-.5-.5-.5-.7-.5h-.6c-.2 0-.6.1-.9.400-.3.300-1.100 1.100-1.100 2.600s1.100 3 1.300 3.200c.2.200 2.200 3.500 5.400 4.700 2.700 1 3.200.8 3.800.8.600-.1 1.900-.8 2.100-1.500.3-.8.300-1.400.2-1.500-.1-.2-.3-.2-.6-.4l-2.200-1c-.3-.1-.5-.2-.7.200-.2.300-.8 1-1 1.200-.2.200-.4.200-.7.100-.3-.2-1.300-.5-2.500-1.600-.9-.8-1.600-1.900-1.700-2.200-.2-.3 0-.5.100-.6l.5-.6c.2-.2.200-.3.300-.5.100-.2.100-.4 0-.6z" fill="#fff"/></svg>
<svg class="r" style="left:944px;top:13px;" width="24" height="21" viewBox="0 0 24 21"><path d="M.5 1.500C.5.900 1 .5 1.500.5h7.300l2.200 2.500h12c.3 0 .5.200.5.500V5H.5z" fill="#f5b400"/><rect x=".5" y="3.700" width="23" height="16.300" rx=".8" fill="#ffd75e"/><path d="M.5 17.500h23V19.200c0 .4-.4.800-.8.800H1.300c-.4 0-.8-.4-.8-.8z" fill="#f5b400"/><path d="M5 20v-7.200c0-.4.400-.8.800-.8h12.400c.4 0 .8.400.8.800V20h-4.200v-4.400H9.200V20z" fill="#3a96dd"/></svg>
<svg class="r" style="left:1001px;top:11px;" width="24" height="24" viewBox="-12 -12 24 24"><circle r="11.100" fill="#de4b3b"/><path d="M0 -5.300L9.700 -5.300A11.100 11.100 0 0 1 -.2 11.100L4.590 2.650L0 0z" fill="#fbc21e"/><path d="M4.590 2.650L-.2 11.100A11.100 11.100 0 0 1 -9.500 -5.750L-4.590 2.650L0 0z" fill="#1fa15b"/><circle r="5.300" fill="#f4f6f8"/><circle r="4.200" fill="#4a86ea"/></svg>
<svg class="r" style="left:1058px;top:11px;" width="24" height="24" viewBox="-12 -12 24 24"><circle r="11.100" fill="#de4b3b"/><path d="M0 -5.300L9.700 -5.300A11.100 11.100 0 0 1 -.2 11.100L4.590 2.650L0 0z" fill="#fbc21e"/><path d="M4.590 2.650L-.2 11.100A11.100 11.100 0 0 1 -9.500 -5.750L-4.590 2.650L0 0z" fill="#1fa15b"/><circle r="5.300" fill="#f4f6f8"/><circle r="4.200" fill="#4a86ea"/></svg>
<svg class="r" style="left:1013px;top:23px;" width="13" height="13" viewBox="-6.500 -6.500 13 13"><defs><clipPath id="b1"><circle cx="-.3" cy="-.5" r="5.700"/></clipPath></defs><g clip-path="url(#b1)"><rect x="-7" y="-7" width="14" height="14" fill="#57202a"/><path d="M2.500 -6L6 -5V1L3.500 .5 2 -3z" fill="#c9c9d2"/><path d="M-6 -1l2-1 .8 4-2.500 2z" fill="#9a9088"/><ellipse cx="-.8" cy="-2.800" rx="2.600" ry="2" fill="#3a1218"/><rect x="-1.800" y="-1.500" width="2.400" height="2.300" fill="#7a5040"/></g></svg>
<svg class="r" style="left:1070px;top:23px;" width="14" height="14" viewBox="-7 -7 14 14"><defs><clipPath id="b2"><circle cx="-.5" cy="-.8" r="5.900"/></clipPath></defs><g clip-path="url(#b2)"><rect x="-7" y="-7" width="14" height="14" fill="#f3f3f3"/><path d="M-7 7V2.500L-3.500 0l3 .5L3 2l2 5z" fill="#1f4868"/><ellipse cx="-2.800" cy="-3.800" rx="2.500" ry="2.300" fill="#8a2a8c"/><ellipse cx="-3.500" cy="-3.300" rx="1.300" ry="1.500" fill="#c42a62"/><rect x="-2.800" y="-2.300" width="2.200" height="2.600" rx="1" fill="#b08050"/><rect x="-2.600" y="0" width="1.900" height="6" fill="#c79a30"/></g></svg>
<svg class="r" style="left:1116px;top:12px;" width="23" height="22" viewBox="0 0 23 22"><defs><linearGradient id="sn" x1="0" y1="0" x2="0" y2="1"><stop offset="0" stop-color="#ffdf1c"/><stop offset="1" stop-color="#f8c400"/></linearGradient></defs><rect width="23" height="22" rx="1" fill="url(#sn)"/><path d="M11.500 11.500H22v10.500H11.500z" fill="#3b3a39"/><path d="M12.500 21L21 12.500V21z" fill="#e0a800"/></svg>
<svg class="r" style="left:1669px;top:17px;" width="22" height="13" viewBox="0 0 22 13"><path d="M1.500 2L11 11.200 20.500 2" fill="none" stroke="#fff" stroke-width="1.500"/></svg>
<svg class="r" style="left:1718px;top:13px;" width="23" height="22" viewBox="0 0 23 22"><g fill="none" stroke="#fff" stroke-width="1.500"><path d="M2.500 20.500A17.500 17.500 0 0 1 20 2.500"/><path d="M7.700 20.500A12.300 12.300 0 0 1 20 8"/><path d="M12.800 20.500A7.200 7.200 0 0 1 20 13.300"/></g><circle cx="18.700" cy="18.800" r="1.900" fill="#fff"/></svg>
<svg class="r" style="left:1763px;top:13px;" width="27" height="19" viewBox="0 0 27 19"><path d="M6.500 4.500H24v12H6.500" fill="none" stroke="#fff" stroke-width="1.400"/><rect x="24" y="8" width="1.800" height="4.500" fill="#fff"/><rect x="9" y="6.800" width="12.700" height="7.400" fill="#fff"/><path d="M2.300 .8v4M6.300 .8v4" stroke="#fff" stroke-width="1.300"/><path d="M1 4.300h6.600v2.500c0 1.900-1.500 3.300-3.300 3.300S1 8.700 1 6.800z" fill="none" stroke="#fff" stroke-width="1.300"/><path d="M4.300 10v7.500" stroke="#fff" stroke-width="1.300"/></svg>
<svg class="r" style="left:1806px;top:12px;" width="36" height="21" viewBox="0 0 36 21"><rect x="1.700" y="1.700" width="32" height="17.600" rx="1" fill="none" stroke="#fff" stroke-width="1.400"/><path d="M6 6.500h24" stroke="#fff" stroke-width="1" stroke-dasharray="1.500 1.700"/><path d="M6 10.500h24" stroke="#fff" stroke-width="1" stroke-dasharray="3 1.800 1.500 1.800"/><path d="M6 15h4M12 15h12.500M26.500 15H30" stroke="#fff" stroke-width="1.100"/></svg>
<div class="t" style="left:1858.26px;top:15.00px;font-size:18.5px;line-height:18.5px;color:#fff;font-weight:400;transform:scaleX(0.9547);transform-origin:0 0;">13:44</div>
<div class="r" style="left:1913px;top:0px;width:1px;height:46px;background:#8a8f97;"></div>
<div class="r" style="left:0px;top:46px;width:1920px;height:51px;background:#ffa93f;"></div>
<svg class="r" style="left:719px;top:46px;" width="381" height="51" viewBox="0 0 381 51"><path d="M0 51C6 51 10 47 10 41V11C10 5 14.500 0 20.500 0H360.500C366.500 0 371 5 371 11V41C371 47 375 51 381 51z" fill="#ffdfba"/></svg>
<svg class="r" style="left:31px;top:61px;" width="22" height="22" viewBox="0 0 24 24"><defs><linearGradient id="cg31" x1="0" y1=".6" x2="1" y2=".4"><stop offset="0" stop-color="#74cf8c"/><stop offset=".55" stop-color="#52b98f"/><stop offset="1" stop-color="#43ad93"/></linearGradient></defs><ellipse cx="11.900" cy="12" rx="11.600" ry="11" fill="url(#cg31)"/><path d="M17.500 19.500L22.300 23.200 21.800 17z" fill="#49b191"/><circle cx="6.300" cy="9.400" r="3.100" fill="#ffa93f" stroke="#86d79c" stroke-width=".5"/></svg>
<div class="t" style="left:65.43px;top:63.00px;font-size:18px;line-height:18px;color:#1f1f1f;font-weight:400;transform:scaleX(0.9868);transform-origin:0 0;">(2) JungleWorks Internal</div>
<svg class="r" style="left:341.0px;top:65.0px;" width="13.0" height="13.0" viewBox="-6.5 -6.5 13.0 13.0"><path d="M-5.5 -5.5L5.5 5.5M5.5 -5.5L-5.5 5.5" stroke="#1f1f1f" stroke-width="2.2" fill="none"/></svg>
<div class="r" style="left:371px;top:57px;width:2px;height:30px;background:#c8842f;"></div>
<svg class="r" style="left:389.5px;top:60.5px;" width="23" height="23" viewBox="0 0 24 24"><circle cx="12" cy="12" r="9.900" fill="#ffa93f" stroke="#202124" stroke-width="2.400"/><path d="M12 2L13.100 4.900C12.500 6 11 7 10.900 7.700C10.300 8.500 10.200 9 10.400 9.300C12 9.500 13.500 9.500 14.200 10.100C14.800 11 14.800 12 15.300 12.300C16.500 13 17.500 13 18.500 12.800L21.700 11.500A10 10 0 0 0 12 2z" fill="#202124"/><path d="M2 13L3.900 12.300C6 12.200 7.500 12.400 8.700 12.800C10 13.200 11.300 13.500 12 14.200C12.800 15 13.200 15.700 12.800 16.300C12 17.300 10.500 17.300 9.800 18C9 19 9 20 8.700 21.300A10 10 0 0 1 2 13z" fill="#202124"/></svg>
<div class="t" style="left:424.37px;top:63.00px;font-size:18px;line-height:18px;color:#1f1f1f;font-weight:400;transform:scaleX(0.9959);transform-origin:0 0;width:267.7px;overflow:hidden;-webkit-mask-image:linear-gradient(90deg,#000 238.6px,transparent 265.7px);">Edit knowledge-base-yelo ‹ Jungl</div>
<svg class="r" style="left:699.5px;top:65.0px;" width="13.0" height="13.0" viewBox="-6.5 -6.5 13.0 13.0"><path d="M-5.5 -5.5L5.5 5.5M5.5 -5.5L-5.5 5.5" stroke="#1f1f1f" stroke-width="2.2" fill="none"/></svg>
<svg class="r" style="left:748px;top:62px;" width="22.2" height="20.424" viewBox="95 88 718 662"><defs><linearGradient id="lsA" x1="0" y1="340" x2="0" y2="745" gradientUnits="userSpaceOnUse"><stop offset="0" stop-color="#fd742b"/><stop offset=".35" stop-color="#fd8836"/><stop offset="1" stop-color="#ffc65c"/></linearGradient><linearGradient id="lsB" x1="0" y1="540" x2="0" y2="745" gradientUnits="userSpaceOnUse"><stop offset="0" stop-color="#fe9a44"/><stop offset="1" stop-color="#fd742b"/></linearGradient></defs><path fill="url(#lsB)" d="M250 625L325 745H405L395 730 365 715 337 670 452 575 370 528z"/><path fill="url(#lsB)" d="M625 588L640 640 650 745H738L730 730 700 715 690 640 702 570 765 488 700 540z"/><path fill="url(#lsA)" stroke="#fff" stroke-width="5" paint-order="stroke" d="M520 120C550 100 600 88 640 100L665 118 700 135 722 172 760 215 772 250 790 262 792 300 805 330 808 400 795 440 800 465 778 455 770 482 752 498C720 540 670 565 625 580L578 600 572 700 585 745H500L512 700 500 640 490 590C450 580 410 560 370 535L255 625 165 650 160 700 188 745H100L112 700 120 620 150 580 200 500C215 470 225 455 240 445C300 420 400 390 500 365L525 345 512 300 492 292 482 262 447 246 433 215 470 170z"/><path fill="none" stroke="#fd7a2e" stroke-width="14" d="M245 448C200 440 170 400 180 360C190 318 250 310 320 305C362 302 388 290 372 275C356 262 320 265 300 268"/><ellipse cx="272" cy="265" rx="40" ry="23" fill="#fd742b"/></svg>
<div class="t" style="left:782.65px;top:63.00px;font-size:18px;line-height:18px;color:#1f1f1f;font-weight:400;transform:scaleX(0.9750);transform-origin:0 0;">Yelo.</div>
<svg class="r" style="left:1058.5px;top:65.0px;" width="13.0" height="13.0" viewBox="-6.5 -6.5 13.0 13.0"><path d="M-5.5 -5.5L5.5 5.5M5.5 -5.5L-5.5 5.5" stroke="#1f1f1f" stroke-width="2.2" fill="none"/></svg>
<svg class="r" style="left:1107px;top:63px;" width="22" height="16.5" viewBox="0 0 24 18"><path d="M0 3.300V16.400c0 .9.700 1.600 1.600 1.600H5.500V8.700z" fill="#4285f4"/><path d="M24 3.300V16.400c0 .9-.7 1.600-1.600 1.600H18.500V8.700z" fill="#34a853"/><path d="M18.500 1.700V8.700L24 4.600V2.400c0-2-2.300-3.100-3.900-1.900z" fill="#fbbc04"/><path d="M5.500 8.700V1.700L12 6.600l6.500-4.900v7L12 13.600z" fill="#ea4335"/><path d="M0 2.400v2.200l5.500 4.100V1.700L3.900.5C2.300-.7 0 .4 0 2.400z" fill="#c5221f"/></svg>
<div class="t" style="left:1141.13px;top:63.00px;font-size:18px;line-height:18px;color:#1f1f1f;font-weight:400;transform:scaleX(0.9648);transform-origin:0 0;width:277.6px;overflow:hidden;-webkit-mask-image:linear-gradient(90deg,#000 247.6px,transparent 275.6px);">Catalogue CSV Report - harshdee</div>
<svg class="r" style="left:1416.5px;top:65.0px;" width="13.0" height="13.0" viewBox="-6.5 -6.5 13.0 13.0"><path d="M-5.5 -5.5L5.5 5.5M5.5 -5.5L-5.5 5.5" stroke="#1f1f1f" stroke-width="2.2" fill="none"/></svg>
<div class="r" style="left:1446px;top:57px;width:2px;height:30px;background:#c8842f;"></div>
<svg class="r" style="left:1470px;top:61px;" width="20" height="20" viewBox="0 0 20 20"><path d="M10 1v18M1 10h18" stroke="#1a1a1a" stroke-width="2.600"/></svg>
<svg class="r" style="left:1670px;top:60px;" width="20" height="16" viewBox="0 0 20 16"><path d="M2.300 3.500L9.500 11.200 16.700 3.500" fill="none" stroke="#2a1c08" stroke-width="1.200"/></svg>
<div class="r" style="left:1740px;top:67px;width:15px;height:1.3px;background:#1c1306;"></div>
<svg class="r" style="left:1808px;top:59px;" width="18" height="17" viewBox="0 0 18 17"><path d="M1.500 4.500h11v11h-11z" fill="none" stroke="#1c1306" stroke-width="1.200"/><path d="M4.500 4.500v-3h11v11h-3" fill="none" stroke="#1c1306" stroke-width="1.200"/></svg>
<svg class="r" style="left:1877px;top:59px;" width="17" height="17" viewBox="0 0 17 17"><path d="M1 1l15 15M16 1L1 16" stroke="#1c1306" stroke-width="1.200"/></svg>
<div class="r" style="left:0px;top:97px;width:1920px;height:53px;background:#ffdfba;"></div>
<svg class="r" style="left:22px;top:113px;" width="22" height="22" viewBox="0 0 22 22"><path d="M20.500 11H3.500M11 2.500L2.500 11l8.500 8.500" fill="none" stroke="#1f1f1f" stroke-width="2.200"/></svg>
<svg class="r" style="left:70px;top:113px;" width="22" height="22" viewBox="0 0 22 22"><path d="M1.500 11h17M11 2.500l8.500 8.500-8.500 8.500" fill="none" stroke="#a79a8a" stroke-width="2.200"/></svg>
<svg class="r" style="left:118px;top:113px;" width="23" height="23" viewBox="0 0 23 23"><path d="M18.200 5.600A8.800 8.800 0 1 0 20.300 13.200" fill="none" stroke="#1f1f1f" stroke-width="2.300"/><path d="M21.300 1.300v8.200h-8.200z" fill="#1f1f1f"/></svg>
<svg class="r" style="left:166px;top:113px;" width="22" height="22" viewBox="0 0 22 22"><path d="M1.500 10.500L11 2l9.500 8.500M4.500 8.500V19.500h13V8.500" fill="none" stroke="#1f1f1f" stroke-width="2.200" stroke-linejoin="miter"/></svg>
<div class="r" style="left:210px;top:103px;width:1452px;height:42px;background:#dfc5a3;border-radius:21px;"></div>
<svg class="r" style="left:230px;top:116px;" width="14" height="17" viewBox="0 0 14 17"><rect x=".5" y="6" width="12.500" height="10.500" rx="1.200" fill="#4d4a48"/><path d="M3.300 6.500V4.500a3.400 3.400 0 0 1 6.800 0v2" fill="none" stroke="#4d4a48" stroke-width="1.900"/></svg>
<div class="t" style="left:260.17px;top:114.00px;font-size:21px;line-height:21px;color:#1f1f1f;font-weight:400;transform:scaleX(0.9836);transform-origin:0 0;">admin.yelo.red</div>
<div class="t" style="left:394.50px;top:114.00px;font-size:21px;line-height:21px;color:#6b635a;font-weight:400;transform:scaleX(1.0234);transform-origin:0 0;">/en/dashboard/merchants/catalogue/list?id=803516&amp;isOpen=1</div>
<svg class="r" style="left:1575px;top:116px;" width="24" height="15" viewBox="0 0 24 15"><circle cx="6" cy="7" r="4.300" fill="none" stroke="#6b645c" stroke-width="3"/><path d="M10 5.500h13v3.500h-2.500v4h-3.500v-4H10z" fill="#6b645c"/></svg>
<svg class="r" style="left:1623px;top:113px;" width="24" height="23" viewBox="0 0 24 23"><path d="M12 2.200l2.900 6.700 7.200.6-5.500 4.800 1.700 7.100L12 17.600l-6.300 3.800 1.700-7.100L1.900 9.500l7.200-.6z" fill="none" stroke="#6b645c" stroke-width="2"/></svg>
<svg class="r" style="left:1683px;top:111.8px;" width="24" height="24" viewBox="0 0 24 24"><defs><linearGradient id="e1" x1="0" y1="0" x2="1" y2="1"><stop offset="0" stop-color="#a63fbb"/><stop offset="1" stop-color="#c93aa0"/></linearGradient><linearGradient id="e2" x1="0" y1="0" x2="1" y2="1"><stop offset="0" stop-color="#cf369e"/><stop offset="1" stop-color="#ea3d88"/></linearGradient><linearGradient id="e3" x1="0" y1="0" x2="0" y2="1"><stop offset="0" stop-color="#cc3a9e"/><stop offset="1" stop-color="#f04c76"/></linearGradient></defs><rect x="0" y="0" width="8.300" height="8.800" fill="url(#e1)"/><path d="M9.800 0H17c3.900 0 7 3 7 6.900v1.900H9.800z" fill="url(#e2)"/><path d="M0 10.100h8.300V23.800C3.700 22.800 0 18.600 0 13.500z" fill="url(#e3)"/><rect x="9.800" y="10.100" width="7.300" height="7.500" fill="#f4458f"/></svg>
<svg class="r" style="left:1731px;top:112px;" width="24" height="24" viewBox="-12 -12 24 24"><g stroke="#5a5cf0" stroke-width="2.700"><path d="M0 -3.600V-12" transform="rotate(0)"/><path d="M0 -3.600V-12" transform="rotate(30)"/><path d="M0 -3.600V-12" transform="rotate(60)"/><path d="M0 -3.600V-12" transform="rotate(90)"/><path d="M0 -3.600V-12" transform="rotate(120)"/><path d="M0 -3.600V-12" transform="rotate(150)"/><path d="M0 -3.600V-12" transform="rotate(180)"/><path d="M0 -3.600V-12" transform="rotate(210)"/><path d="M0 -3.600V-12" transform="rotate(240)"/><path d="M0 -3.600V-12" transform="rotate(270)"/><path d="M0 -3.600V-12" transform="rotate(300)"/><path d="M0 -3.600V-12" transform="rotate(330)"/></g></svg>
<svg class="r" style="left:1780px;top:112px;" width="23" height="23" viewBox="0 0 24 24"><path d="M20.500 11H19V7c0-1.100-.9-2-2-2h-4V3.500a2.500 2.500 0 0 0-5 0V5H4c-1.100 0-2 .9-2 2v3.800h1.500c1.500 0 2.700 1.200 2.700 2.700S5 16.200 3.500 16.200H2V20c0 1.100.9 2 2 2h3.800v-1.500c0-1.500 1.200-2.700 2.700-2.700s2.700 1.200 2.700 2.700V22H17c1.100 0 2-.9 2-2v-4h1.500a2.500 2.500 0 0 0 0-5z" fill="#1f1f1f"/></svg>
<svg class="r" style="left:1823px;top:108px;" width="33" height="33" viewBox="0 0 33 33"><defs><clipPath id="avc"><circle cx="16.500" cy="16.500" r="16.300"/></clipPath></defs><g clip-path="url(#avc)"><rect width="33" height="33" fill="#f8f8f8"/><rect x="0" y="19.800" width="33" height="1.200" fill="#b8764a"/><path d="M0 33c.5-7 3.500-12 9-13.500l5-2 6.500 2.500c4.500 1.200 8 4 9.500 8.500l1.500 4.500z" fill="#1f3c4c"/><ellipse cx="14.300" cy="13.300" rx="4.500" ry="5.300" fill="#b88a66"/><path d="M10 14.800c.5 3.300 2.200 5.200 4.400 5.200s3.700-1.900 4-5.200c-1.500 1.200-6.400 1.300-8.400 0z" fill="#2a211c"/><path d="M4.800 9C5 3.800 9 .5 13.500 1c4.200.5 7 3.600 6.700 7.500-.1 1.200-.5 2.200-1.100 2.800-3-2.300-7.500-2.300-11 .5-1.800-.3-3-1.300-3.300-2.800z" fill="#8b1f48"/><path d="M7.500 8c2.500-2.300 6.500-2.800 10-.8" fill="none" stroke="#6a1436" stroke-width=".7"/><path d="M13.200 18h4.300l.6 3.500-1 11.500h-4.600l.6-11z" fill="#b98a64"/><path d="M12.900 17.800c1-.9 4-.9 5 0l.3 2.300h-5.500z" fill="#a5775a"/></g></svg>
<div class="r" style="left:1884.7px;top:113.9px;width:4.6px;height:4.6px;background:#1f1f1f;border-radius:50%;"></div>
<div class="r" style="left:1884.7px;top:121.5px;width:4.6px;height:4.6px;background:#1f1f1f;border-radius:50%;"></div>
<div class="r" style="left:1884.7px;top:129.0px;width:4.6px;height:4.6px;background:#1f1f1f;border-radius:50%;"></div>
<div class="r" style="left:0px;top:150px;width:1920px;height:49px;background:#ffdfba;"></div>
<div class="r" style="left:0px;top:199px;width:1920px;height:1.4px;background:#cdab88;"></div>
<svg class="r" style="left:22px;top:164px;" width="22" height="16.5" viewBox="0 0 24 18"><path d="M0 3.300V16.400c0 .9.700 1.600 1.600 1.600H5.500V8.700z" fill="#4285f4"/><path d="M24 3.300V16.400c0 .9-.7 1.600-1.600 1.600H18.500V8.700z" fill="#34a853"/><path d="M18.500 1.700V8.700L24 4.600V2.400c0-2-2.300-3.100-3.900-1.900z" fill="#fbbc04"/><path d="M5.500 8.700V1.700L12 6.600l6.500-4.900v7L12 13.600z" fill="#ea4335"/><path d="M0 2.400v2.200l5.500 4.100V1.700L3.900.5C2.300-.7 0 .4 0 2.400z" fill="#c5221f"/></svg>
<div class="t" style="left:55.83px;top:163.00px;font-size:18px;line-height:18px;color:#1f1f1f;font-weight:400;transform:scaleX(1.0300);transform-origin:0 0;">Inbox</div>
<svg class="r" style="left:127px;top:162px;" width="22.5" height="18.675" viewBox="0 0 24 20"><path d="M0 5.500L5.500 0v5.500z" fill="#ea4335"/><path d="M5.500 0h11.200c1 0 1.800.8 1.800 1.800V5.500H5.500z" fill="#fbbc04"/><path d="M0 5.500h5.500v9H0z" fill="#4285f4"/><path d="M0 14.500h5.500V20H1.800C.8 20 0 19.200 0 18.200z" fill="#1a73e8"/><path d="M5.500 14.500h13v3.700c0 1-.8 1.800-1.800 1.800H5.500z" fill="#34a853"/><path d="M18.500 5.500v9L14 10z" fill="#00832d"/><path d="M18.500 5.800l4-3.300c.6-.5 1.500-.1 1.500.7v13.600c0 .8-.9 1.200-1.500.7l-4-3.300z" fill="#00ac47"/></svg>
<div class="t" style="left:161.00px;top:163.00px;font-size:18px;line-height:18px;color:#1f1f1f;font-weight:400;transform:scaleX(1.0427);transform-origin:0 0;">My Meet</div>
<svg class="r" style="left:258.5px;top:161px;" width="22" height="22" viewBox="0 0 24 24"><defs><linearGradient id="cg258" x1="0" y1=".6" x2="1" y2=".4"><stop offset="0" stop-color="#74cf8c"/><stop offset=".55" stop-color="#52b98f"/><stop offset="1" stop-color="#43ad93"/></linearGradient></defs><ellipse cx="11.900" cy="12" rx="11.600" ry="11" fill="url(#cg258)"/><path d="M17.500 19.500L22.300 23.200 21.800 17z" fill="#49b191"/><circle cx="6.300" cy="9.400" r="3.100" fill="#ffdfba" stroke="#86d79c" stroke-width=".5"/></svg>
<div class="t" style="left:293.94px;top:163.00px;font-size:18px;line-height:18px;color:#1f1f1f;font-weight:400;transform:scaleX(0.9788);transform-origin:0 0;">(8) JungleWorks Int...</div>
<svg class="r" style="left:485px;top:160px;" width="24" height="24" viewBox="0 0 24 24"><rect x="0" y="0" width="24" height="24" rx="2.300" fill="#0e8bff"/><path d="M7.800 6.600h8.400v2.400H7.800zM7.800 11.500h8.400v2.100h-5.800v2.400h5.800v2.300H7.800z" fill="#fff"/></svg>
<div class="t" style="left:519.61px;top:163.00px;font-size:18px;line-height:18px;color:#1f1f1f;font-weight:400;transform:scaleX(0.9623);transform-origin:0 0;">Report: Issue</div>
<svg class="r" style="left:648px;top:160px;" width="22" height="24" viewBox="0 0 22 24"><defs><linearGradient id="yk" x1="0" y1="0" x2="0" y2="1"><stop offset="0" stop-color="#2c8c84"/><stop offset=".5" stop-color="#3fbf78"/><stop offset="1" stop-color="#93dc58"/></linearGradient></defs><path d="M.4 5C7 4.800 15 3.600 21.300 1.900C21 8 18.500 14.500 14.500 18C11 21 6 22.500 1.500 22.700L2.300 19.200C6.500 16.700 9 13.500 10.300 9.700L4.100 8.700z" fill="url(#yk)"/></svg>
<div class="t" style="left:682.65px;top:163.00px;font-size:18px;line-height:18px;color:#1f1f1f;font-weight:400;transform:scaleX(0.9643);transform-origin:0 0;">Yelo Knowledge Ba...</div>
<svg class="r" style="left:872.5px;top:160.5px;" width="23" height="23" viewBox="0 0 24 24"><circle cx="12" cy="12" r="9.900" fill="#ffdfba" stroke="#202124" stroke-width="2.400"/><path d="M12 2L13.100 4.900C12.500 6 11 7 10.900 7.700C10.300 8.500 10.200 9 10.400 9.300C12 9.500 13.500 9.500 14.200 10.100C14.800 11 14.800 12 15.300 12.300C16.500 13 17.500 13 18.500 12.800L21.700 11.500A10 10 0 0 0 12 2z" fill="#202124"/><path d="M2 13L3.900 12.300C6 12.200 7.500 12.400 8.700 12.800C10 13.200 11.300 13.500 12 14.200C12.800 15 13.200 15.700 12.800 16.300C12 17.300 10.500 17.300 9.800 18C9 19 9 20 8.700 21.300A10 10 0 0 1 2 13z" fill="#202124"/></svg>
<div class="t" style="left:907.83px;top:163.00px;font-size:18px;line-height:18px;color:#1f1f1f;font-weight:400;transform:scaleX(0.9631);transform-origin:0 0;">Jungleworks Blog S...</div>
<svg class="r" style="left:1098.5px;top:160.5px;" width="23" height="23" viewBox="0 0 24 24"><circle cx="12" cy="12" r="9.900" fill="#ffdfba" stroke="#202124" stroke-width="2.400"/><path d="M12 2L13.100 4.900C12.500 6 11 7 10.900 7.700C10.300 8.500 10.200 9 10.400 9.300C12 9.500 13.500 9.500 14.200 10.100C14.800 11 14.800 12 15.300 12.300C16.500 13 17.500 13 18.500 12.800L21.700 11.500A10 10 0 0 0 12 2z" fill="#202124"/><path d="M2 13L3.900 12.300C6 12.200 7.500 12.400 8.700 12.800C10 13.200 11.300 13.500 12 14.200C12.800 15 13.200 15.700 12.800 16.300C12 17.300 10.500 17.300 9.800 18C9 19 9 20 8.700 21.300A10 10 0 0 1 2 13z" fill="#202124"/></svg>
<div class="t" style="left:1133.09px;top:163.00px;font-size:18px;line-height:18px;color:#1f1f1f;font-weight:400;transform:scaleX(0.9776);transform-origin:0 0;">Email</div>
<svg class="r" style="left:1202.5px;top:160.5px;" width="23" height="23" viewBox="0 0 24 24"><circle cx="12" cy="12" r="9.900" fill="#ffdfba" stroke="#202124" stroke-width="2.400"/><path d="M12 2L13.100 4.900C12.500 6 11 7 10.900 7.700C10.300 8.500 10.200 9 10.400 9.300C12 9.500 13.500 9.500 14.200 10.100C14.800 11 14.800 12 15.300 12.300C16.500 13 17.500 13 18.500 12.800L21.700 11.500A10 10 0 0 0 12 2z" fill="#202124"/><path d="M2 13L3.900 12.300C6 12.200 7.500 12.400 8.700 12.800C10 13.200 11.300 13.500 12 14.200C12.800 15 13.200 15.700 12.800 16.300C12 17.300 10.500 17.300 9.800 18C9 19 9 20 8.700 21.300A10 10 0 0 1 2 13z" fill="#202124"/></svg>
<div class="t" style="left:1236.78px;top:163.00px;font-size:18px;line-height:18px;color:#1f1f1f;font-weight:400;transform:scaleX(0.9663);transform-origin:0 0;">User ID</div>
<svg class="r" style="left:1320px;top:160px;" width="24" height="24" viewBox="0 0 24 24"><rect x="0" y="0" width="24" height="24" rx="2.300" fill="#0e8bff"/><path d="M7.800 6.600h8.400v2.400H7.800zM7.800 11.500h8.400v2.100h-5.800v2.400h5.800v2.300H7.800z" fill="#fff"/></svg>
<div class="t" style="left:1354.96px;top:163.00px;font-size:18px;line-height:18px;color:#1f1f1f;font-weight:400;transform:scaleX(0.9512);transform-origin:0 0;">Issue Feedback</div>
<svg class="r" style="left:1500.5px;top:159.5px;" width="23.5" height="25" viewBox="0 0 24 25"><path d="M12 .3L.8 4.300l1.700 14.800L12 24.500z" fill="#dd0031"/><path d="M12 .3l11.200 4-1.700 14.800L12 24.500z" fill="#c3002f"/><path d="M12 3L5 18.700h2.600l1.400-3.500h6l1.400 3.500H19zm2 10H10l2-4.900z" fill="#fff"/></svg>
<div class="t" style="left:1535.55px;top:163.00px;font-size:18px;line-height:18px;color:#1f1f1f;font-weight:400;transform:scaleX(1.0079);transform-origin:0 0;">FormApp</div>
<div class="t" style="left:1726.67px;top:160.00px;font-size:19px;line-height:19px;color:#1f1f1f;font-weight:400;transform:scaleX(1.0965);transform-origin:0 0;-webkit-text-stroke:.5px #1f1f1f;">»</div>
<div class="r" style="left:1754px;top:160.5px;width:1.5px;height:23.5px;background:#c4a98b;"></div>
<svg class="r" style="left:1771px;top:160.5px;" width="22" height="22" viewBox="0 0 22 22"><rect x="1.300" y="1.300" width="19.400" height="19.400" rx="1" fill="none" stroke="#1f1f1f" stroke-width="2.200"/><path d="M5 7h2.600M9.500 7H17M5 11h2.600M9.500 11H17M5 15h2.600M9.500 15H17" stroke="#1f1f1f" stroke-width="2.100"/></svg>
<div class="t" style="left:1805.08px;top:163.00px;font-size:18px;line-height:18px;color:#1f1f1f;font-weight:400;transform:scaleX(0.9876);transform-origin:0 0;">Reading list</div>
</body></html>
